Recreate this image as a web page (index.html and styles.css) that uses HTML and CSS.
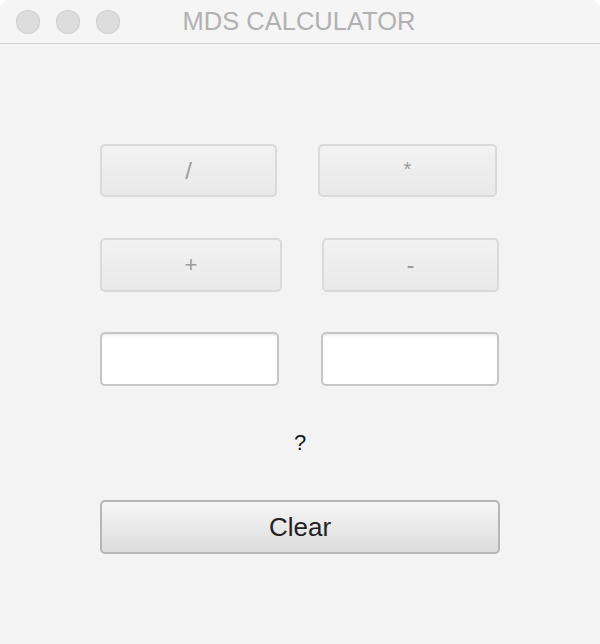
FILE: index.html
```html
<!DOCTYPE html>
<html>
<head>
<meta charset="utf-8">
<link rel="stylesheet" href="styles.css">
</head>
<body>
<div class="window">
  <div class="titlebar">
    <div class="lights">
      <span class="light"></span>
      <span class="light"></span>
      <span class="light"></span>
    </div>
    <div class="title">MDS CALCULATOR</div>
  </div>
  <div class="content">
    <div class="row row1">
      <button class="btn op op-div">/</button>
      <button class="btn op op-mul">*</button>
    </div>
    <div class="row row2">
      <button class="btn op op-add">+</button>
      <button class="btn op op-sub">-</button>
    </div>
    <div class="row row3">
      <input class="field field-a" type="text">
      <input class="field field-b" type="text">
    </div>
    <div class="result">?</div>
    <button class="btn clear">Clear</button>
  </div>
</div>
</body>
</html>
```

FILE: styles.css
```css
html, body {
  margin: 0;
  padding: 0;
  background: #ffffff;
}
body {
  width: 600px;
  height: 644px;
  overflow: hidden;
  font-family: "Liberation Sans", Arial, sans-serif;
}
.window {
  width: 600px;
  height: 644px;
  background: #f3f3f3;
  border-radius: 9px 9px 0 0;
  overflow: hidden;
  display: flex;
  flex-direction: column;
}
.titlebar {
  height: 43px;
  background: #f5f5f5;
  border-bottom: 1px solid #d2d2d2;
  position: relative;
  display: flex;
  align-items: center;
  justify-content: center;
  flex-shrink: 0;
}
.lights {
  position: absolute;
  left: 16px;
  top: 10px;
  display: flex;
  gap: 16px;
}
.light {
  width: 24px;
  height: 24px;
  border-radius: 50%;
  background: #dddddd;
  box-shadow: inset 0 0 0 1px #d1d1d1;
}
.title {
  font-size: 25.5px;
  color: #b1b1b1;
  margin-left: -2px;
  margin-top: -1px;
}
.content {
  display: flex;
  flex-direction: column;
  padding-left: 100px;
}
.row {
  display: flex;
}
.row1 { margin-top: 100px; gap: 41px; }
.row2 { margin-top: 41px; gap: 40px; }
.row3 { margin-top: 40px; gap: 42px; }
.btn {
  box-sizing: border-box;
  margin: 0;
  padding: 0;
  border: 2px solid #dadada;
  border-radius: 5px;
  background: linear-gradient(#f2f2f2, #e9e9e9);
  font-family: "Liberation Sans", Arial, sans-serif;
  color: #9d9d9d;
  display: flex;
  align-items: center;
  justify-content: center;
}
.op { height: 53px; }
.row2 .op { height: 54px; }
.op-div { width: 177px; font-size: 24px; }
.op-mul { width: 179px; font-size: 20px; padding-bottom: 2px; }
.op-add { width: 182px; font-size: 22px; }
.op-sub { width: 177px; font-size: 24px; }
.field {
  box-sizing: border-box;
  margin: 0;
  height: 54px;
  border: 2px solid #c6c6c6;
  border-radius: 5px;
  background: #ffffff;
  box-shadow: inset 0 3px 3px -2px #e2e2e2;
  outline: none;
}
.field-a { width: 179px; }
.field-b { width: 178px; }
.result {
  width: 400px;
  text-align: center;
  margin-top: 44px;
  height: 26px;
  line-height: 26px;
  font-size: 22px;
  color: #1a1a1a;
}
.clear {
  margin-top: 44px;
  width: 400px;
  height: 54px;
  border: 2px solid #b6b6b6;
  background: linear-gradient(#f6f6f6, #dcdcdc);
  color: #222222;
  font-size: 26px;
}
```
